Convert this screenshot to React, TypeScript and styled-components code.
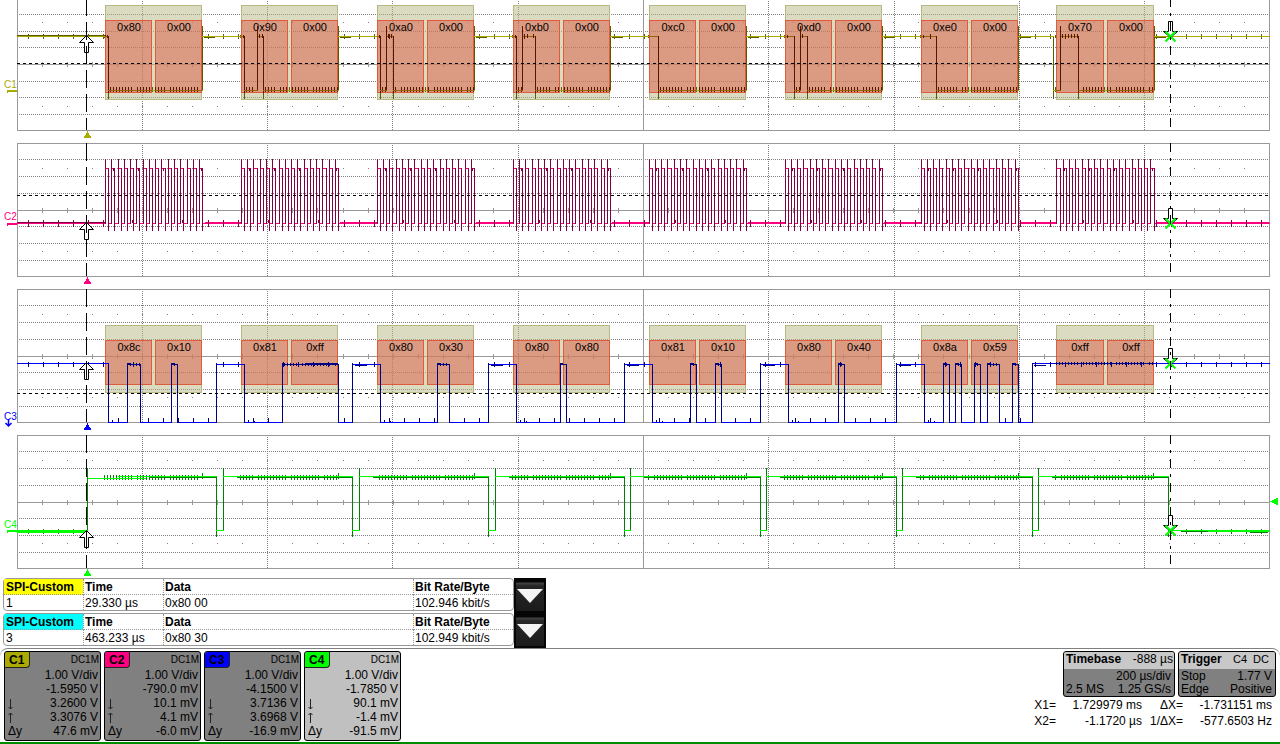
import React from "react";
import styled, { createGlobalStyle } from "styled-components";

const GlobalStyle = createGlobalStyle`
  * { box-sizing: border-box; }
  body {
    margin: 0;
    background: #fff;
    color: #000;
    font: 12px/16px "Liberation Sans", Arial, sans-serif;
  }
`;

/* ---------- geometry of the graticule ---------- */

const WIDTH = 1280;
const LEFT = 17;
const RIGHT = 1269;
const PANEL = 133;
const BURST = 135.92;
const bursts = [0, 1, 2, 3, 4, 5, 6, 7];
const columns = [142, 267, 392, 518, 768, 894, 1019, 1144];
const minor = Array.from({ length: 49 }, (_, i) => Math.floor(LEFT + 0.5 + (i + 1) * 25.04));
const samples = Array.from({ length: 83 }, (_, i) => Math.floor(28.2 + i * 15.04));

type Edge = number;

const hline = (x1: number, x2: number, y: number) => `M${x1} ${y + 0.5}H${x2}`;
const vline = (x: number, y1: number, y2: number) => `M${x + 0.5} ${y1}V${y2}`;

/* ---------- layout ---------- */

const Screen = styled.main`
  display: flex;
  flex-direction: column;
  min-width: 960px;
  overflow: hidden;
`;

const Plot = styled.svg`
  display: block;
  width: 100%;
  height: auto;
  font-family: "Liberation Sans", Arial, sans-serif;
  font-size: 11px;
`;

const Strokes = styled.path<{ $color: string; $width?: number }>`
  fill: none;
  stroke: ${(p) => p.$color};
  stroke-width: ${(p) => p.$width ?? 1};
  shape-rendering: crispEdges;
`;

const Frame = styled.rect`
  fill: rgba(184, 184, 132, 0.5);
  stroke: #b8b884;
  shape-rendering: crispEdges;
`;

const ByteBox = styled.rect`
  fill: rgba(220, 90, 68, 0.5);
  stroke: #e05a3c;
  shape-rendering: crispEdges;
`;

/* ---------- plot parts ---------- */

function Graticule({ rows, dotRows }: { rows: number[]; dotRows: number[] }) {
  return (
    <g>
      <Strokes
        $color="#808080"
        strokeDasharray="1 1"
        d={rows.map((y) => hline(LEFT + 2, RIGHT, y)).join("") + columns.map((x) => vline(x, 2, PANEL)).join("")}
      />
      <Strokes
        $color="#999"
        d={
          `M${LEFT + 0.5} .5H${RIGHT + 0.5}V${PANEL + 0.5}H${LEFT + 0.5}Z` +
          hline(LEFT, RIGHT, 67) +
          vline(643, 0, PANEL) +
          minor.map((x) => vline(x, 65, 70)).join("")
        }
      />
      <Strokes $color="#808080" d={dotRows.map((y) => minor.map((x) => hline(x, x + 1, y)).join("")).join("")} />
    </g>
  );
}

const boxLeft = (i: number) => (i === 7 ? 1056 : 105 + i * 136);
const boxWidth = (i: number) => (i === 7 ? 97 : 96);
const byteRects = (i: number) => {
  const x = boxLeft(i);
  const first = i === 7 ? 47 : 46;
  return [
    { x, w: first },
    { x: x + first + 4, w: 46 },
  ];
};

function DecodeBoxes(props: { top: number; height: number; byteTop: number; byteHeight: number }) {
  const { top, height, byteTop, byteHeight } = props;
  return (
    <g>
      {bursts.map((i) => (
        <g key={i}>
          <Frame x={boxLeft(i) + 0.5} y={top + 0.5} width={boxWidth(i)} height={height} />
          {byteRects(i).map((r) => (
            <ByteBox key={r.x} x={r.x + 0.5} y={byteTop + 0.5} width={r.w} height={byteHeight} />
          ))}
        </g>
      ))}
    </g>
  );
}

function ByteLabels({ bytes, y }: { bytes: string[][]; y: number }) {
  return (
    <g fill="#000" textAnchor="middle">
      {bytes.map((pair, i) =>
        pair.map((text, j) => (
          <text key={`${i}-${j}`} x={byteRects(i)[j].x + 24} y={y}>
            {text}
          </text>
        )),
      )}
    </g>
  );
}

/* Splits a list of edges into high and low runs. */
function runs(edges: Edge[], startHigh: boolean) {
  const stops = [LEFT, ...edges, RIGHT];
  return stops.slice(0, -1).map((x, i) => ({ from: x, to: stops[i + 1], high: startHigh ? i % 2 === 0 : i % 2 === 1 }));
}

function levels(edges: Edge[], startHigh: boolean, hi: number, lo: number) {
  return runs(edges, startHigh)
    .map((r) => hline(r.from, r.to + 1, r.high ? hi : lo))
    .join("");
}

function transitions(edges: Edge[], startHigh: boolean, hi: number, lo: number, over: number, under: number) {
  return edges
    .map((x, i) => {
      const falling = startHigh ? i % 2 === 0 : i % 2 === 1;
      return falling ? vline(x, hi, lo + under + 1) : vline(x, hi - over, lo + 1);
    })
    .join("");
}

function sampleTicks(edges: Edge[], startHigh: boolean, hi: number | null, lo: number | null, up: number, down: number) {
  const list = runs(edges, startHigh);
  return samples
    .map((x) => {
      const run = list.find((r) => x > r.from && x < r.to);
      const y = run ? (run.high ? hi : lo) : null;
      return y === null ? "" : vline(x, y - up, y + down + 1);
    })
    .join("");
}

function Cursors({ height, phase, upTip, cross, level }: { height: number; phase: number; upTip: number; cross: number; level?: number }) {
  return (
    <g>
      {level !== undefined && <Strokes $color="#000" strokeDasharray="3 3" d={hline(LEFT, RIGHT, level)} />}
      <path
        d={`M86.5 ${upTip}.5l-7 7h5v10h4v-10h5z`}
        fill="#fff"
        stroke="#000"
      />
      <path d={`M1168.5 ${cross - 4.5}v-10h4v10M1163.5 ${cross - 4.5}h5M1172.5 ${cross - 4.5}h5l-7 6l-7-6`} fill="#fff" stroke="#000" />
      <path d={`M1165.5 ${cross - 4.5}l10 10m0-10l-10 10`} stroke="#00ff00" strokeWidth="2" />
      <Strokes $color="#000" strokeDasharray="18 6" d={vline(86, phase, height)} />
      <Strokes $color="#000" strokeDasharray="9 6 3 6" d={vline(1170, phase, height)} />
    </g>
  );
}

function TriggerMark({ color }: { color: string }) {
  return <path d={`M87 134h1v2h1v2h1v1h1v2h-7v-2h1v-1h1v-2h1z`} fill={color} shapeRendering="crispEdges" />;
}

function ChannelMark({ name, color, y, line }: { name: string; color: string; y: number; line?: number }) {
  return (
    <g fill={color}>
      <text x="4" y={y} fontSize="10">
        {name}
      </text>
      {line !== undefined && <path d={`M7 ${line}h10v2h-9v1h-1z`} shapeRendering="crispEdges" />}
    </g>
  );
}

/* ---------- channel 1: data out ---------- */

const edges1 = [
  108, 202, 244, 257, 263, 338, 380, 386, 393, 474, 516, 522, 535, 610, 658, 746, 794, 800, 807, 882, 936, 1018, 1053,
  1060, 1078, 1154,
];

const ticksEvery3 = (from: number, to: number, y1: number, y2: number) => {
  let d = "";
  for (let x = from; x < to; x += 3) {
    if ((x * 7) % 11 !== 3) d += vline(x, y1, y2);
  }
  return d;
};

function ChannelOne() {
  const hi = 39;
  const lo = 93;
  const all = runs(edges1, true);
  const noise = all
    .map((r) => {
      if (!r.high) return ticksEvery3(r.from + 2, r.to, 90, 95);
      if (r.to - r.from < 20) return ticksEvery3(r.from + 2, r.to, 37, 41);
      return "";
    })
    .join("");
  const ripple = bursts
    .map((i) => hline(Math.round(204 + i * BURST), Math.round(215 + i * BURST), hi + 1) + ticksEvery3(boxLeft(i) - 1, boxLeft(i) + 3, 38, 41))
    .join("");
  const dark =
    transitions(edges1, true, hi, lo, 10, 8) +
    noise +
    ripple +
    sampleTicks(edges1, true, hi, null, 2, 2) +
    hline(LEFT, 106, hi - 1);
  return (
    <Plot viewBox={`0 3 ${WIDTH} 143`} role="img" aria-label="Channel C1">
      <defs>
        <clipPath id="bytes">
          {bursts.flatMap((i) => byteRects(i).map((r) => <rect key={r.x} x={r.x} y="23" width={r.w + 1} height="73" />))}
        </clipPath>
      </defs>
      <Graticule rows={[17, 34, 50, 84, 100, 117]} dotRows={[25, 109]} />
      <DecodeBoxes top={8} height={94} byteTop={23} byteHeight={72} />
      <ByteLabels
        y={34}
        bytes={["0x80", "0x90", "0xa0", "0xb0", "0xc0", "0xd0", "0xe0", "0x70"].map((b) => [b, "0x00"])}
      />
      <Strokes $color="#5a5a00" d={dark} />
      <Strokes $color="#aaaa00" d={levels(edges1, true, hi, lo)} />
      <g clipPath="url(#bytes)">
        <Strokes $color="#966400" d={levels(edges1, true, hi, lo)} />
        <Strokes $color="#5a1400" d={dark} />
        <Strokes $color="#966400" d={levels(edges1, true, -9, lo)} />
      </g>
      <ChannelMark name="C1" color="#aaaa00" y={91} line={93} />
      <TriggerMark color="#aaaa00" />
      <Cursors height={PANEL} phase={1} upTip={38} cross={39} level={66} />
    </Plot>
  );
}

/* ---------- channel 2: clock ---------- */

function ChannelTwo() {
  const hi = 25;
  const lo = 80;
  const edges = bursts.flatMap((i) =>
    Array.from({ length: 16 }, (_, k) => 105.5 + i * BURST + k * 6.27).flatMap((x) => [Math.floor(x), Math.floor(x + 3.1)]),
  );
  const idle = [LEFT, ...bursts.flatMap((i) => [Math.floor(105.5 + i * BURST), Math.floor(205 + i * BURST)]), RIGHT];
  let thick = "";
  for (let k = 0; k < idle.length; k += 2) thick += hline(idle[k], idle[k + 1], k === 0 ? lo : lo - 1);
  const quiet = bursts.flatMap((i) => [Math.floor(105 + i * BURST), Math.floor(203 + i * BURST)]);
  const wiggles = bursts
    .map((i) => [1, 4, 5, 9, 12, 15].map((k) => vline(Math.floor(107 + i * BURST + k * 6.27), k % 2 ? 25 : 77, k % 2 ? 28 : 80)).join(""))
    .join("");
  return (
    <Plot viewBox={`0 0 ${WIDTH} 146`} role="img" aria-label="Channel C2">
      <Graticule rows={[16, 33, 50, 83, 100, 117]} dotRows={[25, 108]} />
      <Strokes $color="#ff0080" d={levels(edges, false, hi, lo) + thick} />
      <Strokes
        $color="#800040"
        d={
          transitions(edges, false, hi, lo, 9, 7) +
          wiggles +
          hline(LEFT, 105, lo - 1) +
          sampleTicks(quiet, true, lo, null, 3, 3)
        }
      />
      <ChannelMark name="C2" color="#ff0080" y={77} line={80} />
      <TriggerMark color="#ff0080" />
      <Cursors height={PANEL} phase={0} upTip={79} cross={80} level={52} />
    </Plot>
  );
}

/* ---------- channel 3: data in ---------- */

const edges3 = [
  108, 127, 140, 171, 177, 216, 244, 282, 338, 352, 380, 437, 449, 488, 516, 560, 566, 624, 652, 690, 696, 715, 721, 760,
  788, 838, 844, 896, 924, 943, 949, 955, 961, 974, 980, 987, 999, 1012, 1018, 1032,
];

function ChannelThree() {
  const hi = 75;
  const lo = 133;
  const short = runs(edges3, true)
    .filter((r) => r.high && r.to - r.from < 20)
    .map((r) => hline(r.from, r.to, hi) + hline(r.from, r.from + 3, hi - 1) + ticksEvery3(r.from + 3, r.to, 74, 77))
    .join("");
  const dark =
    transitions(edges3, true, hi, lo, 1, 0) +
    short +
    sampleTicks(edges3, true, hi, null, 2, 2) +
    sampleTicks(edges3, true, null, lo, 4, 0) +
    hline(282, 339, hi) +
    hline(305, 338, hi - 1) +
    ticksEvery3(284, 338, 74, 77) +
    hline(1053, 1154, hi - 1) +
    ticksEvery3(1056, 1154, 73, 76) +
    bursts.slice(2).map((i) => hline(Math.round(83 + i * BURST), Math.round(95 + i * BURST), hi + 1)).join("") +
    bursts.slice(0, 7).map((i) => vline(112 + i * 136, 131, 133) + vline(118 + i * 136, 132, 133)).join("");
  return (
    <Plot viewBox={`0 0 ${WIDTH} 146`} role="img" aria-label="Channel C3">
      <Graticule rows={[16, 33, 50, 83, 100, 117]} dotRows={[25, 108]} />
      <DecodeBoxes top={36} height={67} byteTop={51} byteHeight={44} />
      <ByteLabels
        y={62}
        bytes={[
          ["0x8c", "0x10"],
          ["0x81", "0xff"],
          ["0x80", "0x30"],
          ["0x80", "0x80"],
          ["0x81", "0x10"],
          ["0x80", "0x40"],
          ["0x8a", "0x59"],
          ["0xff", "0xff"],
        ]}
      />
      <Strokes
        $color="#0000ff"
        d={runs(edges3, true)
          .map((r) => hline(r.from, r.to + 1, r.high ? (r.from === LEFT || r.to === RIGHT ? hi - 1 : hi) : lo))
          .join("")}
      />
      <Strokes $color="#000080" d={dark} />
      <ChannelMark name="C3" color="#0000ff" y={131} />
      <path d="M8.5 130.5v6M5.5 134l3 3l3-3" fill="none" stroke="#0000ff" strokeWidth="1.5" />
      <TriggerMark color="#0000ff" />
      <Cursors height={PANEL} phase={0} upTip={73} cross={74} level={104} />
    </Plot>
  );
}

/* ---------- channel 4: chip select ---------- */

const edges4 = [
  87,
  ...bursts.slice(0, 7).flatMap((i) => [Math.floor(216.6 + i * BURST), Math.floor(223.2 + i * BURST)]),
  1168,
];

function ChannelFour() {
  const hi = 41;
  const lo = 95;
  const noise = bursts
    .map((i) => ticksEvery3(boxLeft(i) - 1, boxLeft(i) + 98, 40, 45) + vline(boxLeft(i) + 97, 38, 44))
    .join("");
  return (
    <Plot viewBox={`0 0 ${WIDTH} 143`} role="img" aria-label="Channel C4">
      <Graticule rows={[16, 33, 50, 83, 100, 117]} dotRows={[25, 108]} />
      <Strokes
        $color="#008000"
        d={
          transitions(edges4, false, hi, lo, 8, 6) +
          noise +
          runs(edges4, false)
            .filter((r) => r.high)
            .map((r) => hline(Math.max(r.from + 14, 150), r.to, hi + 1))
            .join("") +
          hline(96, 118, hi + 2) +
          hline(1181, 1209, lo + 1) +
          hline(1250, 1268, lo + 2) +
          sampleTicks([87, 1168], false, null, lo + 1, 2, 2)
        }
      />
      <Strokes
        $color="#00ff00"
        d={
          runs(edges4, false)
            .map((r) => (r.from === 87 ? hline(88, 146, hi + 2) + hline(118, 217, hi) : hline(r.from, r.to + 1, r.high ? hi : lo)))
            .join("") +
          hline(LEFT, 87, lo + 1) +
          hline(LEFT, 87, lo + 2) +
          hline(1208, RIGHT, lo + 1)
        }
      />
      <ChannelMark name="C4" color="#00ff00" y={93} line={95} />
      <path d="M1270 66h2v-1h2v-1h2v-1h2v7h-2v-1h-2v-1h-2v-1h-2z" fill="#00ff00" shapeRendering="crispEdges" />
      <TriggerMark color="#00ff00" />
      <Cursors height={PANEL} phase={0} upTip={95} cross={95} />
    </Plot>
  );
}

/* ---------- decode tables ---------- */

const DecodeList = styled.section`
  display: flex;
  flex-direction: column;
  padding-left: 3px;
`;

const DecodeRow = styled.div`
  display: flex;
  align-items: flex-start;
  height: 35px;
`;

const DecodeTable = styled.table`
  width: 511px;
  table-layout: fixed;
  border: 1px solid #999;
  border-radius: 4px;
  border-collapse: separate;
  border-spacing: 0;
`;

const Cell = styled.td<{ $fill?: string }>`
  height: 15px;
  padding: 1px 1px 0;
  line-height: 14px;
  text-align: left;
  vertical-align: top;
  white-space: nowrap;
  background: ${(p) => p.$fill ?? "transparent"};
  border-left: 1px dotted #999;
  &:first-child {
    border-left: 0;
    padding-left: 2px;
  }
`;

const HeadCell = styled(Cell)`
  height: 16px;
  font-weight: bold;
  border-bottom: 1px dotted #999;
`;

const DropButton = styled.button`
  display: flex;
  align-items: center;
  justify-content: center;
  width: 32px;
  height: 35px;
  padding: 2px 0 0;
  border: 2px solid #060606;
  border-radius: 0;
  background: linear-gradient(#060606 2px, #444 3px, #262626 6px, #1c1c1c);
`;

const decodes = [
  { index: "1", color: "#ffff00", time: "29.330 µs", data: "0x80 00", rate: "102.946 kbit/s" },
  { index: "3", color: "#00ffff", time: "463.233 µs", data: "0x80 30", rate: "102.949 kbit/s" },
];

function Decodes() {
  return (
    <DecodeList>
      {decodes.map((d) => (
        <DecodeRow key={d.index}>
          <DecodeTable>
            <colgroup>
              <col style={{ width: 79 }} />
              <col style={{ width: 80 }} />
              <col style={{ width: 250 }} />
              <col />
            </colgroup>
            <thead>
              <tr>
                <HeadCell as="th" $fill={d.color}>
                  SPI-Custom
                </HeadCell>
                <HeadCell as="th">Time</HeadCell>
                <HeadCell as="th">Data</HeadCell>
                <HeadCell as="th">Bit Rate/Byte</HeadCell>
              </tr>
            </thead>
            <tbody>
              <tr>
                <Cell>{d.index}</Cell>
                <Cell>{d.time}</Cell>
                <Cell>{d.data}</Cell>
                <Cell>{d.rate}</Cell>
              </tr>
            </tbody>
          </DecodeTable>
          <DropButton type="button" aria-label={`Expand decode ${d.index}`}>
            <svg width="26" height="15" viewBox="0 0 26 15">
              <path d="M0 0h26L13 14z" fill="#f4f4f4" />
            </svg>
          </DropButton>
        </DecodeRow>
      ))}
    </DecodeList>
  );
}

/* ---------- status bar ---------- */

const StatusBar = styled.footer`
  display: flex;
  justify-content: space-between;
  height: 96px;
  padding: 2px 4px 0;
  border-top: 1px solid #808080;
  border-bottom: 2px solid #008a00;
  border-radius: 8px 8px 0 0;
`;

const Channels = styled.div`
  display: flex;
  gap: 3px;
`;

const ChannelCard = styled.section<{ $active?: boolean }>`
  width: 97px;
  height: 90px;
  border: 1px solid #000;
  border-radius: 3px;
  background: ${(p) => (p.$active ? "#c0c0c0" : "#808080")};
  line-height: 14px;
`;

const CardHead = styled.header`
  display: flex;
  justify-content: space-between;
  height: 16px;
  padding-right: 1px;
  font-size: 10px;
  line-height: 16px;
`;

const Badge = styled.h2<{ $color: string }>`
  width: 25px;
  height: 16px;
  margin: 0;
  padding-left: 4px;
  border-right: 1px solid #222;
  border-bottom: 1px solid #222;
  border-radius: 3px 0 4px 0;
  background: ${(p) => p.$color};
  font-size: 12px;
  line-height: 16px;
`;

const Reading = styled.div`
  display: flex;
  justify-content: space-between;
  height: 14px;
  padding: 0 2px 0 3px;
  white-space: nowrap;
`;

const ArrowIcon = styled.svg`
  width: 5px;
  height: 14px;
  fill: none;
  stroke: #222;
`;

const Down = () => (
  <ArrowIcon viewBox="0 0 5 14">
    <path d="M2.5 3v10M.5 11l2 2l2-2" />
  </ArrowIcon>
);

const Up = () => (
  <ArrowIcon viewBox="0 0 5 14">
    <path d="M2.5 13V3M.5 5l2-2l2 2" />
  </ArrowIcon>
);

const channels = [
  { name: "C1", color: "#aaaa00", scale: "1.00 V/div", offset: "-1.5950 V", low: "3.2600 V", high: "3.3076 V", delta: "47.6 mV" },
  { name: "C2", color: "#ff0080", scale: "1.00 V/div", offset: "-790.0 mV", low: "10.1 mV", high: "4.1 mV", delta: "-6.0 mV" },
  { name: "C3", color: "#0000ff", scale: "1.00 V/div", offset: "-4.1500 V", low: "3.7136 V", high: "3.6968 V", delta: "-16.9 mV" },
  { name: "C4", color: "#00ff00", scale: "1.00 V/div", offset: "-1.7850 V", low: "90.1 mV", high: "-1.4 mV", delta: "-91.5 mV", active: true },
];

const Acquisition = styled.div`
  display: flex;
  flex-direction: column;
  align-items: flex-end;
`;

const InfoCards = styled.div`
  display: flex;
  gap: 3px;
`;

const InfoCard = styled.section<{ $wide?: boolean }>`
  width: ${(p) => (p.$wide ? 112 : 98)}px;
  height: 46px;
  overflow: hidden;
  border: 1px solid #000;
  border-radius: 3px;
  background: #808080;
`;

const InfoLine = styled.div`
  display: flex;
  justify-content: space-between;
  height: 13px;
  padding: 0 3px 0 2px;
  line-height: 15px;
  white-space: nowrap;
`;

const InfoHead = styled(InfoLine)`
  height: 17px;
  padding-right: 1px;
  background: #c8c8c8;
`;

const InfoTitle = styled.strong`
  font-weight: bold;
`;

const Small = styled.span`
  padding-right: 5px;
  font-size: 11px;
  white-space: pre;
`;

const CursorGrid = styled.dl`
  display: grid;
  grid-template-columns: 22px 86px 41px 89px;
  margin: 0;
  padding-right: 4px;
  text-align: right;
  white-space: nowrap;
`;

const Term = styled.dt`
  line-height: 16px;
`;

const Value = styled.dd`
  margin: 0;
  line-height: 16px;
`;

function Status() {
  return (
    <StatusBar>
      <Channels>
        {channels.map((c) => (
          <ChannelCard key={c.name} $active={c.active}>
            <CardHead>
              <Badge $color={c.color}>{c.name}</Badge>
              <span>DC1M</span>
            </CardHead>
            <Reading>
              <span />
              <span>{c.scale}</span>
            </Reading>
            <Reading>
              <span />
              <span>{c.offset}</span>
            </Reading>
            <Reading>
              <Down />
              <span>{c.low}</span>
            </Reading>
            <Reading>
              <Up />
              <span>{c.high}</span>
            </Reading>
            <Reading>
              <span>Δy</span>
              <span>{c.delta}</span>
            </Reading>
          </ChannelCard>
        ))}
      </Channels>
      <Acquisition>
        <InfoCards>
          <InfoCard $wide>
            <InfoHead>
              <InfoTitle>Timebase</InfoTitle>
              <span>-888 µs</span>
            </InfoHead>
            <InfoLine>
              <span />
              <span>200 µs/div</span>
            </InfoLine>
            <InfoLine>
              <span>2.5 MS</span>
              <span>1.25 GS/s</span>
            </InfoLine>
          </InfoCard>
          <InfoCard>
            <InfoHead>
              <InfoTitle>Trigger</InfoTitle>
              <Small>C4  DC</Small>
            </InfoHead>
            <InfoLine>
              <span>Stop</span>
              <span>1.77 V</span>
            </InfoLine>
            <InfoLine>
              <span>Edge</span>
              <span>Positive</span>
            </InfoLine>
          </InfoCard>
        </InfoCards>
        <CursorGrid>
          <Term>X1=</Term>
          <Value>1.729979 ms</Value>
          <Term>ΔX=</Term>
          <Value>-1.731151 ms</Value>
          <Term>X2=</Term>
          <Value>-1.1720 µs</Value>
          <Term>1/ΔX=</Term>
          <Value>-577.6503 Hz</Value>
        </CursorGrid>
      </Acquisition>
    </StatusBar>
  );
}

export default function App() {
  return (
    <>
      <GlobalStyle />
      <Screen>
        <ChannelOne />
        <ChannelTwo />
        <ChannelThree />
        <ChannelFour />
        <Decodes />
        <Status />
      </Screen>
    </>
  );
}
